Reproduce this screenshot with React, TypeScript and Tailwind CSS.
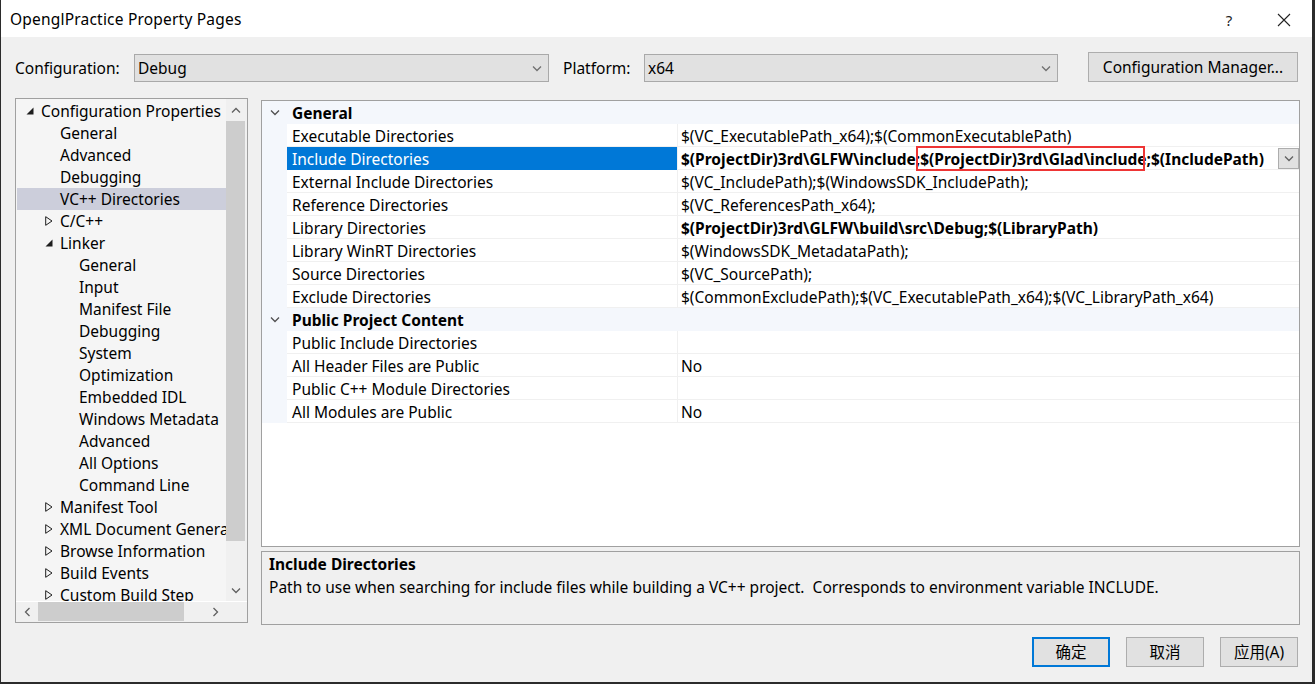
import React from "react";

type Node = { l: number; t: string; e?: "open" | "closed"; sel?: boolean };

const tree: Node[] = [
  { l: 0, t: "Configuration Properties", e: "open" },
  { l: 1, t: "General" },
  { l: 1, t: "Advanced" },
  { l: 1, t: "Debugging" },
  { l: 1, t: "VC++ Directories", sel: true },
  { l: 1, t: "C/C++", e: "closed" },
  { l: 1, t: "Linker", e: "open" },
  { l: 2, t: "General" },
  { l: 2, t: "Input" },
  { l: 2, t: "Manifest File" },
  { l: 2, t: "Debugging" },
  { l: 2, t: "System" },
  { l: 2, t: "Optimization" },
  { l: 2, t: "Embedded IDL" },
  { l: 2, t: "Windows Metadata" },
  { l: 2, t: "Advanced" },
  { l: 2, t: "All Options" },
  { l: 2, t: "Command Line" },
  { l: 1, t: "Manifest Tool", e: "closed" },
  { l: 1, t: "XML Document Generator", e: "closed" },
  { l: 1, t: "Browse Information", e: "closed" },
  { l: 1, t: "Build Events", e: "closed" },
  { l: 1, t: "Custom Build Step", e: "closed" },
];

const indent = ["pl-[9px]", "pl-[28px]", "pl-[47px]"];

function Chevron({ dir, className }: { dir: "up" | "down" | "left" | "right"; className?: string }) {
  const d =
    dir === "down"
      ? "M1 1.5 L5 5.5 L9 1.5"
      : dir === "up"
      ? "M1 5.5 L5 1.5 L9 5.5"
      : dir === "left"
      ? "M5.5 1 L1.5 5 L5.5 9"
      : "M1.5 1 L5.5 5 L1.5 9";
  const w = dir === "up" || dir === "down" ? 10 : 7;
  const h = dir === "up" || dir === "down" ? 7 : 10;
  return (
    <svg width={w} height={h} viewBox={`0 0 ${w} ${h}`} className={className}>
      <path d={d} fill="none" stroke="currentColor" strokeWidth="1.3" />
    </svg>
  );
}

function Expander({ e }: { e?: "open" | "closed" }) {
  if (!e) return <span className="w-[15px] shrink-0" />;
  return (
    <span className="w-[15px] shrink-0 flex items-center">
      {e === "open" ? (
        <svg width="8" height="8" viewBox="0 0 8 8">
          <path d="M7.5 0.5 L7.5 7.5 L0.5 7.5 Z" fill="#1e1e1e" />
        </svg>
      ) : (
        <svg width="8" height="10" viewBox="0 0 8 10">
          <path d="M0.7 0.7 L7 5 L0.7 9.3 Z" fill="none" stroke="#1e1e1e" strokeWidth="1" />
        </svg>
      )}
    </span>
  );
}

type Prop = { n: string; v?: React.ReactNode; bold?: boolean; sel?: boolean };

const general: Prop[] = [
  { n: "Executable Directories", v: "$(VC_ExecutablePath_x64);$(CommonExecutablePath)" },
  {
    n: "Include Directories",
    bold: true,
    sel: true,
    v: (
      <>
        {String.raw`$(ProjectDir)3rd\GLFW\include;`}
        <span className="relative">
          {String.raw`$(ProjectDir)3rd\Glad\include`}
          <span className="absolute -left-[4px] right-[2px] -top-[2px] -bottom-[1px] border-2 border-[#ee3535]" />
        </span>
        {";$(IncludePath)"}
      </>
    ),
  },
  { n: "External Include Directories", v: "$(VC_IncludePath);$(WindowsSDK_IncludePath);" },
  { n: "Reference Directories", v: "$(VC_ReferencesPath_x64);" },
  { n: "Library Directories", bold: true, v: String.raw`$(ProjectDir)3rd\GLFW\build\src\Debug;$(LibraryPath)` },
  { n: "Library WinRT Directories", v: "$(WindowsSDK_MetadataPath);" },
  { n: "Source Directories", v: "$(VC_SourcePath);" },
  { n: "Exclude Directories", v: "$(CommonExcludePath);$(VC_ExecutablePath_x64);$(VC_LibraryPath_x64)" },
];

const publicContent: Prop[] = [
  { n: "Public Include Directories" },
  { n: "All Header Files are Public", v: "No" },
  { n: "Public C++ Module Directories" },
  { n: "All Modules are Public", v: "No" },
];

function Category({ t }: { t: string }) {
  return (
    <div className="flex h-[23px] bg-[#f4f7fc] items-center">
      <div className="w-[25px] flex justify-center text-[#505050]">
        <Chevron dir="down" />
      </div>
      <div className="pl-[5px] pt-[2px] font-bold">{t}</div>
    </div>
  );
}

function PropRow({ p }: { p: Prop }) {
  return (
    <div className="flex h-[23px] leading-[24px]">
      <div className="w-[25px] shrink-0 bg-[#f4f7fc]" />
      <div
        className={
          p.sel
            ? "w-[390px] shrink-0 pl-[5px] bg-[#0078d7] text-white whitespace-nowrap overflow-hidden"
            : "w-[390px] shrink-0 pl-[5px] border-b border-[#f0f0f0] whitespace-nowrap overflow-hidden"
        }
      >
        {p.n}
      </div>
      <div className="w-px shrink-0 bg-[#f0f0f0]" />
      <div className="flex-1 flex border-b border-[#f0f0f0] min-w-0">
        <div className={p.bold ? "flex-1 pl-[3px] font-bold whitespace-nowrap" : "flex-1 pl-[3px] whitespace-nowrap"}>
          {p.v}
        </div>
        {p.sel && (
          <div className="w-[21px] h-[21px] mt-px shrink-0 bg-[#e1e1e1] border border-[#adadad] flex items-center justify-center text-[#606060]">
            <Chevron dir="down" />
          </div>
        )}
      </div>
    </div>
  );
}

export default function App() {
  return (
    <div className="w-[1315px] h-[684px] bg-[#f0f0f0] border-l border-r-[3px] border-b-2 border-[#2b2b2b] flex flex-col text-[15.5px] text-black font-['Noto_Sans','Noto_Sans_CJK_SC',sans-serif] overflow-hidden">
      {/* Title bar */}
      <div className="h-[37px] shrink-0 bg-white flex items-center pt-[3px]">
        <div className="pl-[9px] flex-1 text-[15.5px] tracking-[0.2px]">OpenglPractice Property Pages</div>
        <div className="w-[20px] text-center mr-[38px] text-[15px] text-[#222]">?</div>
        <div className="mr-[21px] flex items-center">
          <svg width="14" height="14" viewBox="0 0 14 14">
            <path d="M1 1 L13 13 M13 1 L1 13" stroke="#222" strokeWidth="1.1" />
          </svg>
        </div>
      </div>

      {/* Configuration row */}
      <div className="flex pt-[15px] h-[45px] shrink-0">
        <div className="w-[133px] pl-[14px] h-[30px] pt-[4px] flex items-center">Configuration:</div>
        <div className="w-[415px] h-[28px] mt-[2px] bg-[#e1e1e1] border border-[#a9a9a9] flex items-center pl-[3px] pr-[6px]">
          <span className="flex-1 pt-[2px]">Debug</span>
          <Chevron dir="down" className="text-[#707070]" />
        </div>
        <div className="w-[95px] pl-[14px] h-[30px] pt-[4px] flex items-center">Platform:</div>
        <div className="w-[414px] h-[28px] mt-[2px] bg-[#e1e1e1] border border-[#a9a9a9] flex items-center pl-[3px] pr-[6px]">
          <span className="flex-1 pt-[2px]">x64</span>
          <Chevron dir="down" className="text-[#707070]" />
        </div>
        <div className="ml-[30px] w-[210px] h-[30px] pt-[2px] bg-[#e1e1e1] border border-[#adadad] flex items-center justify-center">
          Configuration Manager...
        </div>
      </div>

      {/* Main area */}
      <div className="flex mt-[16px] pl-[14px] shrink-0">
        {/* Tree */}
        <div className="w-[233px] h-[525px] border border-[#a0a0a0] bg-[#f5f5f5] flex flex-col">
          <div className="flex h-[502px]">
            <div className="w-[210px] overflow-hidden pt-px">
              {tree.map((n, i) => (
                <div
                  key={i}
                  className={
                    (n.sel ? "bg-[#cccedb] " : "") +
                    "ml-px h-[22px] flex items-center whitespace-nowrap " +
                    indent[n.l]
                  }
                >
                  <Expander e={n.e} />
                  <span className="pt-[2px]">{n.t}</span>
                </div>
              ))}
            </div>
            <div className="w-[21px] flex flex-col bg-[#f0f0f0] pr-[2px]">
              <div className="h-[22px] flex items-center justify-center text-[#606060]">
                <Chevron dir="up" />
              </div>
              <div className="h-[420px] bg-[#cdcdcd]" />
              <div className="flex-1" />
              <div className="h-[22px] flex items-center justify-center text-[#606060]">
                <Chevron dir="down" />
              </div>
            </div>
          </div>
          <div className="flex h-[21px] bg-[#f0f0f0] border-t border-white">
            <div className="w-[22px] flex items-center justify-center text-[#606060]">
              <Chevron dir="left" />
            </div>
            <div className="w-[146px] h-[19px] bg-[#cdcdcd]" />
            <div className="flex-1" />
            <div className="w-[22px] flex items-center justify-center text-[#606060]">
              <Chevron dir="right" />
            </div>
            <div className="w-[21px]" />
          </div>
        </div>

        {/* Right column */}
        <div className="ml-[13px] w-[1039px] flex flex-col">
          <div className="mt-[2px] h-[447px] border border-[#a0a0a0] bg-white">
            <Category t="General" />
            {general.map((p, i) => (
              <PropRow key={i} p={p} />
            ))}
            <Category t="Public Project Content" />
            {publicContent.map((p, i) => (
              <PropRow key={i} p={p} />
            ))}
          </div>
          <div className="mt-[4px] h-[74px] border border-[#a0a0a0] bg-[#f0f0f0] pl-[7px] pt-[2px]">
            <div className="font-bold leading-[21px]">Include Directories</div>
            <div className="leading-[25px]">
              Path to use when searching for include files while building a VC++ project.{"\u00a0\u00a0"}Corresponds to
              environment variable INCLUDE.
            </div>
          </div>
        </div>
      </div>

      {/* Buttons */}
      <div className="flex justify-end gap-[16px] mt-[12px] pr-[14px]">
        <div className="w-[78px] h-[30px] pt-[2px] bg-[#e1e1e1] border-2 border-[#0078d7] flex items-center justify-center">
          确定
        </div>
        <div className="w-[78px] h-[30px] pt-[2px] bg-[#e1e1e1] border border-[#adadad] flex items-center justify-center">
          取消
        </div>
        <div className="w-[78px] h-[30px] pt-[2px] bg-[#e1e1e1] border border-[#adadad] flex items-center justify-center">
          应用(A)
        </div>
      </div>
    </div>
  );
}
